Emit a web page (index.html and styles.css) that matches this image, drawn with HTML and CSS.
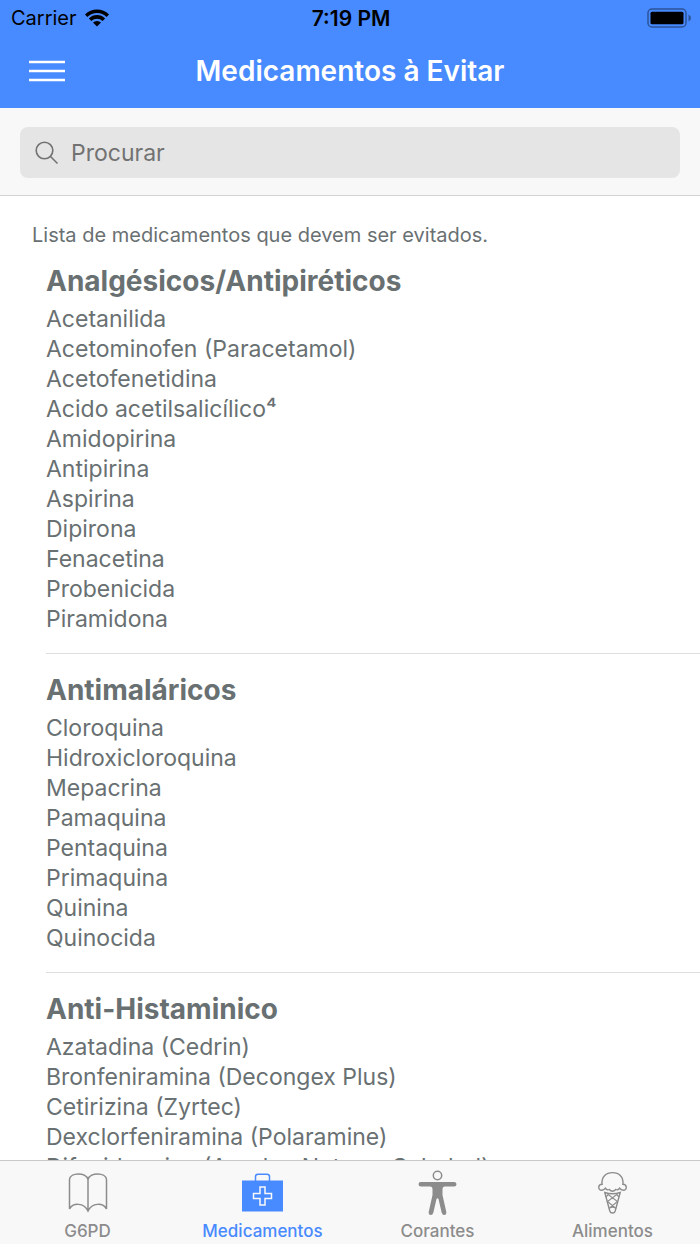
FILE: index.html
```html
<!DOCTYPE html>
<html lang="pt">
<head>
<meta charset="utf-8">
<meta name="viewport" content="width=device-width, initial-scale=1">
<title>Medicamentos à Evitar</title>
<link rel="stylesheet" href="styles.css">
</head>
<body>
<header class="header">
  <div class="status">
    <span class="carrier">Carrier
      <svg class="wifi" width="24" height="18" viewBox="0 0 24 18" aria-hidden="true">
        <path d="M0 5.4A17 17 0 0 1 24 5.4L21.6 7.9A13.6 13.6 0 0 0 2.4 7.9Z"/>
        <path d="M3.9 9.5A11.4 11.4 0 0 1 20.1 9.5L17.6 12A8 8 0 0 0 6.4 12Z"/>
        <path d="M8 13.6A5.8 5.8 0 0 1 16 13.6L12 17.6Z"/>
      </svg>
    </span>
    <span class="time">7:19 PM</span>
    <svg class="battery" width="44" height="20" viewBox="0 0 44 20" role="img" aria-label="Bateria cheia">
      <rect x="1" y="1" width="38" height="18" rx="4" fill="none" stroke="#2c5499" stroke-width="1.5"/>
      <rect x="3.5" y="3.8" width="33" height="12.5" rx="1.5"/>
      <path d="M41.5 6.500Q44 7.500 44 10T41.5 13.500Z" fill="#2c5499"/>
    </svg>
  </div>
  <div class="navbar">
    <button class="menu" type="button" aria-label="Menu">
      <svg width="36" height="22" viewBox="0 0 36 22"><path d="M0 2H36M0 11H36M0 20H36" stroke="#fff" stroke-width="2.6"/></svg>
    </button>
    <h1 class="title">Medicamentos à Evitar</h1>
  </div>
</header>
<form class="search" role="search">
  <label class="field">
    <svg width="24" height="24" viewBox="0 0 24 24" fill="none" stroke="#727272" stroke-width="1.6" aria-hidden="true"><circle cx="9.5" cy="9.5" r="8.3"/><path d="M15.3 15.3L22.5 22.5"/></svg>
    <input class="input" type="search" placeholder="Procurar" aria-label="Procurar">
  </label>
</form>
<main class="content">
  <p class="intro">Lista de medicamentos que devem ser evitados.</p>
  <section class="group">
    <h2 class="heading">Analgésicos/Antipiréticos</h2>
    <ul class="list">
      <li>Acetanilida</li>
      <li>Acetominofen (Paracetamol)</li>
      <li>Acetofenetidina</li>
      <li>Acido acetilsalicílico⁴</li>
      <li>Amidopirina</li>
      <li>Antipirina</li>
      <li>Aspirina</li>
      <li>Dipirona</li>
      <li>Fenacetina</li>
      <li>Probenicida</li>
      <li>Piramidona</li>
    </ul>
  </section>
  <section class="group">
    <h2 class="heading">Antimaláricos</h2>
    <ul class="list">
      <li>Cloroquina</li>
      <li>Hidroxicloroquina</li>
      <li>Mepacrina</li>
      <li>Pamaquina</li>
      <li>Pentaquina</li>
      <li>Primaquina</li>
      <li>Quinina</li>
      <li>Quinocida</li>
    </ul>
  </section>
  <section class="group">
    <h2 class="heading">Anti-Histaminico</h2>
    <ul class="list">
      <li>Azatadina (Cedrin)</li>
      <li>Bronfeniramina (Decongex Plus)</li>
      <li>Cetirizina (Zyrtec)</li>
      <li>Dexclorfeniramina (Polaramine)</li>
      <li>Difenidramina (Apralar, Notuss, Caladryl)</li>
    </ul>
  </section>
</main>
<nav class="tabs">
  <a class="tab" href="#g6pd">
    <svg width="44" height="46" viewBox="0 0 44 46" fill="none" stroke="currentColor" stroke-width="1.5" aria-hidden="true">
      <path d="M22 9.500C20 2 4 2 3.500 9.500V39C7 32.500 18 32.500 22 41C26 32.500 37 32.500 40.500 39V9.500C40 2 24 2 22 9.500V41"/>
    </svg>
    <span>G6PD</span>
  </a>
  <a class="tab active" href="#medicamentos" aria-current="page">
    <svg width="44" height="46" viewBox="0 0 44 46" aria-hidden="true">
      <path d="M14.500 11V6.500Q14.500 4.200 17 4.200H26Q28.500 4.200 28.500 6.500V11" fill="none" stroke="currentColor" stroke-width="1.5"/>
      <path d="M1 10.500H42V41.500H1Z" fill="currentColor"/>
      <path d="M19 17H24V23.500H30.500V28.500H24V35H19V28.500H12.500V23.500H19Z" fill="none" stroke="#f8f8f8" stroke-width="1.5"/>
    </svg>
    <span>Medicamentos</span>
  </a>
  <a class="tab" href="#corantes">
    <svg width="44" height="46" viewBox="0 0 44 46" fill="currentColor" aria-hidden="true">
      <circle cx="21.5" cy="5.5" r="4.2" fill="none" stroke="currentColor" stroke-width="1.5"/>
      <path d="M5 12H38Q40.500 12 40.500 14.200T38 16.500H28.500Q26.500 16.700 26.500 19V25L30.300 42Q30.500 44.800 28.300 45Q26.300 45 25.700 42.800L22.500 29Q21.500 27.500 20.500 29L17.300 42.800Q16.700 45 14.700 45Q12.500 44.800 12.700 42L16.500 25V19Q16.500 16.700 14.500 16.500H5Q2.500 16.500 2.500 14.200T5 12Z"/>
    </svg>
    <span>Corantes</span>
  </a>
  <a class="tab" href="#alimentos">
    <svg width="44" height="46" viewBox="0 0 44 46" fill="none" stroke="currentColor" stroke-width="1.4" aria-hidden="true">
      <path d="M11.100 14.200C10.200 7 15 2.600 21.500 2.600S32.800 7 31.900 14.200C36.200 14.200 36.400 20.300 32.300 20.300C30.500 20.300 29.300 19.200 28.600 18.200C27.600 20 26 20.200 24.800 19.500C22.800 21.500 20.200 21.500 18.200 19.500C17 20.200 15.400 20 14.400 18.200C13.700 19.200 12.500 20.300 10.700 20.300C6.600 20.300 6.800 14.200 11.100 14.200Z"/>
      <path d="M13.800 22.500Q21.500 25 29.200 22.500L24.200 41Q23.600 43 21.500 43T18.800 41Z"/>
      <path d="M16.500 24L26.500 31.500L18 38.500M26.500 24L16.500 31.500L25 38.500M14.800 27L17.500 24.500M28.200 27L25.500 24.500M18 38.500Q21.500 36 25 38.500" stroke-width="1.1"/>
    </svg>
    <span>Alimentos</span>
  </a>
</nav>
</body>
</html>
```

FILE: styles.css
```css
* { box-sizing: border-box; }

body {
  margin: 0;
  height: 100vh;
  display: flex;
  flex-direction: column;
  background: #fff;
  color: #697072;
  font-family: Inter, "Liberation Sans", sans-serif;
}

h1, h2, p, ul { margin: 0; padding: 0; }

.header {
  background: #488aff;
  padding-bottom: 2px;
}

.status {
  display: grid;
  grid-template-columns: 1fr auto 1fr;
  align-items: center;
  height: 36px;
  padding: 0 9px 0 11px;
  color: #000;
  font-size: 20px;
}

.carrier {
  display: flex;
  align-items: center;
  gap: 8px;
}

.time {
  font-size: 21px;
  font-weight: 600;
}

.battery { justify-self: end; }

.navbar {
  display: grid;
  grid-template-columns: 64px 1fr 64px;
  align-items: center;
  height: 70px;
  padding: 0 16px;
}

.menu {
  display: flex;
  padding: 13px;
  border: 0;
  background: none;
}

.title {
  color: #fff;
  font-size: 28px;
  font-weight: 600;
  line-height: 36px;
  text-align: center;
}

.search {
  padding: 19px 20px 17px;
  background: #f8f8f8;
  border-bottom: 1px solid #d3d3d3;
}

.field {
  display: flex;
  align-items: center;
  gap: 12px;
  height: 51px;
  padding: 0 15px;
  border-radius: 8px;
  background: #e5e5e5;
}

.input {
  flex: 1;
  min-width: 0;
  padding: 0;
  border: 0;
  outline: 0;
  background: none;
  color: #727272;
  font-family: inherit;
  font-size: 23px;
}

.input::placeholder { color: #727272; opacity: 1; }

.content {
  flex: 1;
  min-height: 0;
  overflow-y: auto;
  scrollbar-width: none;
}

.intro {
  padding: 29px 32px 0;
  font-size: 20px;
  line-height: 20px;
}

.group {
  margin-left: 46px;
  padding: 18px 0 19px;
  border-bottom: 1px solid #dedede;
}

.heading {
  margin-bottom: 5px;
  font-size: 28px;
  font-weight: 700;
  line-height: 36px;
}

.list {
  list-style: none;
  font-size: 23px;
  line-height: 30px;
}

.tabs {
  display: grid;
  grid-template-columns: repeat(4, 1fr);
  height: 84px;
  background: #f8f8f8;
  border-top: 1px solid #c9c9c9;
}

.tab {
  display: flex;
  flex-direction: column;
  align-items: center;
  gap: 4px;
  padding-top: 9px;
  color: #8c8c8c;
  font-size: 17px;
  font-weight: 500;
  line-height: 22px;
  text-decoration: none;
}

.active { color: #488aff; }
```
